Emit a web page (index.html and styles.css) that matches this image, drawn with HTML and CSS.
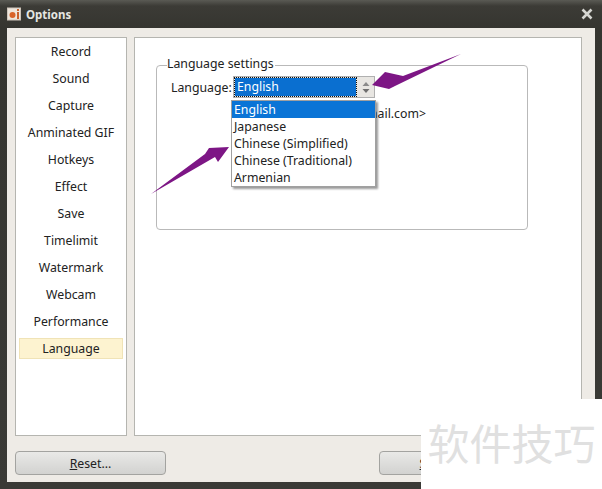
FILE: index.html
```html
<!DOCTYPE html>
<html lang="en">
<head>
<meta charset="utf-8">
<title>Options</title>
<link rel="stylesheet" href="styles.css">
</head>
<body>
<div class="window">
  <header class="titlebar">
    <svg class="app-icon" width="14" height="14" viewBox="0 0 14 14"><rect x="0.5" y="1" width="13" height="12" fill="#efe6dc" stroke="#cfc6bb"/><circle cx="5.5" cy="8" r="3" fill="#d9642a"/><rect x="10" y="5" width="2" height="7" fill="#c9622e"/><rect x="10" y="2" width="2" height="2" fill="#c9622e"/></svg>
    <span class="title">Options</span>
    <svg class="close" width="12" height="12" viewBox="0 0 12 12"><path d="M1.5 1.5L10.5 10.5M10.5 1.5L1.5 10.5" stroke="#d6d6d2" stroke-width="2.6"/></svg>
  </header>
  <div class="client">
    <div class="panes">
      <nav class="sidebar">
        <div class="item">Record</div>
        <div class="item">Sound</div>
        <div class="item">Capture</div>
        <div class="item">Anminated GIF</div>
        <div class="item">Hotkeys</div>
        <div class="item">Effect</div>
        <div class="item">Save</div>
        <div class="item">Timelimit</div>
        <div class="item">Watermark</div>
        <div class="item">Webcam</div>
        <div class="item">Performance</div>
        <div class="item selected">Language</div>
      </nav>
      <main class="content">
        <section class="group">
          <span class="legend">Language settings</span>
          <div class="lang-row">
            <span class="lang-label">Language:</span>
            <div class="combo">
              <span class="combo-value">English</span>
              <span class="combo-arrows">
                <svg width="8" height="13" viewBox="0 0 8 13"><path d="M4 1L7.5 5H0.5Z" fill="#8a8a8a"/><path d="M4 12L7.5 8H0.5Z" fill="#6e6e6e"/></svg>
              </span>
            </div>
          </div>
          <p class="author">&lt;gmail.com&gt;</p>
        </section>
      </main>
    </div>
    <footer class="footer">
      <button class="btn btn-reset"><u>R</u>eset...</button>
      <button class="btn btn-save"><u>S</u>ave</button>
    </footer>
  </div>
</div>
<ul class="dropdown">
  <li class="active">English</li>
  <li>Japanese</li>
  <li>Chinese (Simplified)</li>
  <li>Chinese (Traditional)</li>
  <li>Armenian</li>
</ul>
<svg class="arrows" width="602" height="489" viewBox="0 0 602 489">
  <path d="M461 54L403 76L385 72L372 85L389 89L395 86Z" fill="#7d1685"/>
  <path d="M151 194L205 154L209 148L229 147L218 162L215 157Z" fill="#7d1685"/>
</svg>
<div class="watermark">软件技巧</div>
</body>
</html>
```
FILE: styles.css
```css
* { box-sizing: border-box; }
html, body { margin: 0; padding: 0; }
body {
  width: 602px;
  height: 489px;
  overflow: hidden;
  position: relative;
  font-family: "Noto Sans", sans-serif;
  font-size: 12.3px;
  color: #222;
  background: #3a3a36;
}
.window {
  width: 602px;
  height: 489px;
  display: flex;
  flex-direction: column;
  padding: 0 7px 7px;
  background: linear-gradient(#5a5a54 0, #3c3b36 6px, #353530 28px, #3a3a36 100%);
}
.titlebar {
  height: 28px;
  flex: none;
  display: flex;
  align-items: center;
  gap: 5px;
  color: #e6e6e2;
  font-weight: bold;
  font-size: 11.5px;
}
.title { flex: 1; }
.close { margin-right: 2px; }
.client {
  flex: 1;
  min-height: 0;
  display: flex;
  flex-direction: column;
  background: #eeebe6;
  padding: 9px 13px 7px 8px;
}
.panes {
  height: 399px;
  flex: none;
  display: flex;
  gap: 7px;
}
.sidebar {
  width: 112px;
  flex: none;
  background: #fff;
  border: 1px solid #b5b5b0;
  padding: 3px 3px 0;
  display: flex;
  flex-direction: column;
  gap: 6px;
}
.item {
  height: 21px;
  line-height: 20px;
  text-align: center;
  border: 1px solid transparent;
}
.selected {
  background: #fdf3d0;
  border-color: #f0e3b6;
}
.content {
  flex: 1;
  background: #fff;
  border: 1px solid #b5b5b0;
  padding: 27px 53px 0 21px;
}
.group {
  position: relative;
  height: 165px;
  border: 1px solid #b9b9b9;
  border-radius: 4px;
  padding: 10px 14px;
}
.legend {
  position: absolute;
  left: 10px;
  top: -11px;
  background: #fff;
  padding-right: 1px;
}
.lang-row {
  display: flex;
  align-items: center;
  gap: 2px;
}
.lang-label { width: 60px; }
.combo {
  width: 142px;
  height: 22px;
  display: flex;
  border: 1px solid #b0b0b0;
  background: #e8e6e2;
}
.combo-value {
  flex: 1;
  margin: 1px;
  padding-left: 2px;
  line-height: 17px;
  background: #0a6fd0;
  color: #fff;
  outline: 1px dotted #111;
}
.combo-arrows {
  width: 17px;
  display: flex;
  align-items: center;
  justify-content: center;
}
.author {
  margin: 7px 0 0;
  text-align: right;
  white-space: nowrap;
  width: 255px;
}
.footer {
  flex: 1;
  display: flex;
  justify-content: space-between;
  align-items: flex-start;
  padding-top: 15px;
}
.btn {
  height: 24px;
  width: 151px;
  font: inherit;
  color: #222;
  border: 1px solid #a3a3a0;
  border-radius: 4px;
  background: linear-gradient(#e9e9e7, #d2d2d0);
  padding: 0;
}
.btn-save {
  width: 108px;
  margin-right: 95px;
}
.dropdown {
  position: absolute;
  left: 231px;
  top: 100px;
  width: 145px;
  height: 87px;
  margin: 0;
  padding: 0;
  list-style: none;
  background: #fff;
  border: 1px solid #a0a0a0;
  box-shadow: 2px 2px 2px rgba(0,0,0,0.4);
}
.dropdown li {
  height: 17px;
  line-height: 17px;
  padding-left: 2px;
}
.dropdown .active {
  background: #0a74d6;
  color: #fff;
}
.arrows {
  position: absolute;
  left: 0;
  top: 0;
  pointer-events: none;
}
.watermark {
  position: absolute;
  left: 421px;
  top: 399px;
  width: 181px;
  height: 90px;
  background: #fff;
  color: #e0e0e0;
  font-family: "Noto Sans CJK SC", sans-serif;
  font-size: 42px;
  line-height: 86px;
  text-align: center;
  white-space: nowrap;
}
```
